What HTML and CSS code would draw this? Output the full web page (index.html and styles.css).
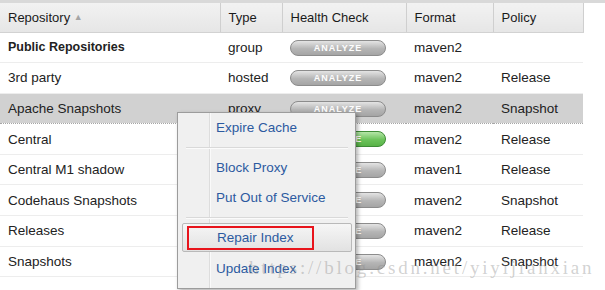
FILE: index.html
```html
<!DOCTYPE html>
<html lang="en">
<head>
    <meta charset="UTF-8">
    <title>Repositories</title>
    <link rel="stylesheet" href="styles.css">
</head>
<body>
    <div class="panel">
        <table class="grid">
            <colgroup>
                <col class="c-repo"><col class="c-type"><col class="c-health"><col class="c-format"><col class="c-policy">
            </colgroup>
            <thead>
                <tr>
                    <th>Repository <span class="sort">&#9650;</span></th>
                    <th>Type</th>
                    <th>Health Check</th>
                    <th>Format</th>
                    <th>Policy</th>
                </tr>
            </thead>
            <tbody>
                <tr class="group-row">
                    <td>Public Repositories</td><td>group</td>
                    <td><span class="analyze">ANALYZE</span></td><td>maven2</td><td></td>
                </tr>
                <tr>
                    <td>3rd party</td><td>hosted</td>
                    <td><span class="analyze">ANALYZE</span></td><td>maven2</td><td>Release</td>
                </tr>
                <tr class="selected">
                    <td>Apache Snapshots</td><td>proxy</td>
                    <td><span class="analyze">ANALYZE</span></td><td>maven2</td><td>Snapshot</td>
                </tr>
                <tr>
                    <td>Central</td><td>proxy</td>
                    <td><span class="analyze on">ANALYZE</span></td><td>maven2</td><td>Release</td>
                </tr>
                <tr>
                    <td>Central M1 shadow</td><td>virtual</td>
                    <td><span class="analyze">ANALYZE</span></td><td>maven1</td><td>Release</td>
                </tr>
                <tr>
                    <td>Codehaus Snapshots</td><td>proxy</td>
                    <td><span class="analyze">ANALYZE</span></td><td>maven2</td><td>Snapshot</td>
                </tr>
                <tr>
                    <td>Releases</td><td>hosted</td>
                    <td><span class="analyze">ANALYZE</span></td><td>maven2</td><td>Release</td>
                </tr>
                <tr>
                    <td>Snapshots</td><td>hosted</td>
                    <td><span class="analyze">ANALYZE</span></td><td>maven2</td><td>Snapshot</td>
                </tr>
            </tbody>
        </table>

        <div class="menu">
            <div class="menu-item">Expire Cache</div>
            <div class="menu-sep"></div>
            <div class="menu-item">Block Proxy</div>
            <div class="menu-item">Put Out of Service</div>
            <div class="menu-sep"></div>
            <div class="menu-item active">Repair Index<span class="mark"></span></div>
            <div class="menu-item">Update Index</div>
        </div>

        <div class="watermark">https://blog.csdn.net/yiyijianxian</div>
    </div>
</body>
</html>
```

FILE: styles.css
```css
body {
    margin: 0;
    background: #fff;
    font-family: "Liberation Sans", Arial, sans-serif;
    font-size: 13.5px;
    color: #222;
}
.panel {
    position: relative;
    width: 605px;
    height: 290px;
    overflow: hidden;
    border-top: 3px solid #d9d9d9;
    box-sizing: border-box;
}
.grid {
    border-collapse: collapse;
    table-layout: fixed;
    width: 583px;
}
.c-repo { width: 220px; }
.c-type { width: 62px; }
.c-health { width: 124px; }
.c-format { width: 87px; }
.c-policy { width: 90px; }
.grid th {
    height: 29px;
    padding: 1px 0 0 8px;
    box-sizing: border-box;
    text-align: left;
    font-weight: normal;
    font-size: 13px;
    color: #1a1a1a;
    background: linear-gradient(#f2f2f2, #e6e6e6);
    border-right: 1px solid #cfcfcf;
    border-left: 1px solid #fafafa;
    border-bottom: 1px solid #d2d2d2;
}
.grid th:first-child {
    border-left: 0;
}
.sort {
    font-size: 9px;
    color: #a5a5a5;
    vertical-align: 2px;
}
.grid td {
    height: 30.6px;
    padding: 0 0 0 8px;
    box-sizing: border-box;
    border-bottom: 1px solid #ededed;
    white-space: nowrap;
    overflow: hidden;
}
.group-row td:first-child {
    font-weight: bold;
    font-size: 12.5px;
}
.selected td {
    background: #d1d1d1;
    border-top: 1px dotted #a6a6a6;
    border-bottom: 1px dotted #a6a6a6;
}
.analyze {
    display: inline-block;
    width: 96px;
    height: 16px;
    line-height: 14px;
    box-sizing: border-box;
    border: 1px solid #8c8c8c;
    border-radius: 8px;
    background: linear-gradient(#e4e4e4, #b5b5b5 55%, #a5a5a5);
    color: #fdfdfd;
    font-size: 9px;
    font-weight: bold;
    letter-spacing: 1px;
    text-align: center;
    vertical-align: middle;
}
.analyze.on {
    border-color: #3e8c36;
    background: linear-gradient(#b5e6a8, #6cc35b 55%, #58b247);
}

.menu {
    position: absolute;
    left: 177px;
    top: 109px;
    width: 179px;
    height: 177px;
    box-sizing: border-box;
    background: linear-gradient(to right, #f0f0f0 31px, #dddddd 31px, #dddddd 32px, #fafafa 32px, #fafafa 33px, #f0f0f0 33px);
    border: 1px solid #9c9c9c;
    box-shadow: 2px 2px 4px rgba(0, 0, 0, 0.3);
}
.menu-item {
    position: relative;
    height: 30px;
    line-height: 30px;
    padding-left: 38px;
    color: #2c5aa0;
}
.menu-item.active {
    margin: 1px 3px 2px 4px;
    padding-left: 34px;
    height: 27px;
    line-height: 27px;
    border: 1px solid #b9b9b9;
    border-radius: 2px;
    background: linear-gradient(#f6f6f6, #e2e2e2);
}
.mark {
    position: absolute;
    left: 4px;
    top: 2px;
    width: 127px;
    height: 24px;
    box-sizing: border-box;
    border: 2px solid #e8141c;
}
.menu-sep {
    height: 1px;
    margin: 4px 7px 4px 8px;
    background: #d9d9d9;
    border-bottom: 1px solid #fbfbfb;
}
.watermark {
    position: absolute;
    left: 249px;
    top: 254px;
    font-family: "Liberation Serif", "Times New Roman", serif;
    font-size: 19px;
    letter-spacing: 2.8px;
    color: rgba(140, 140, 140, 0.4);
}
```
